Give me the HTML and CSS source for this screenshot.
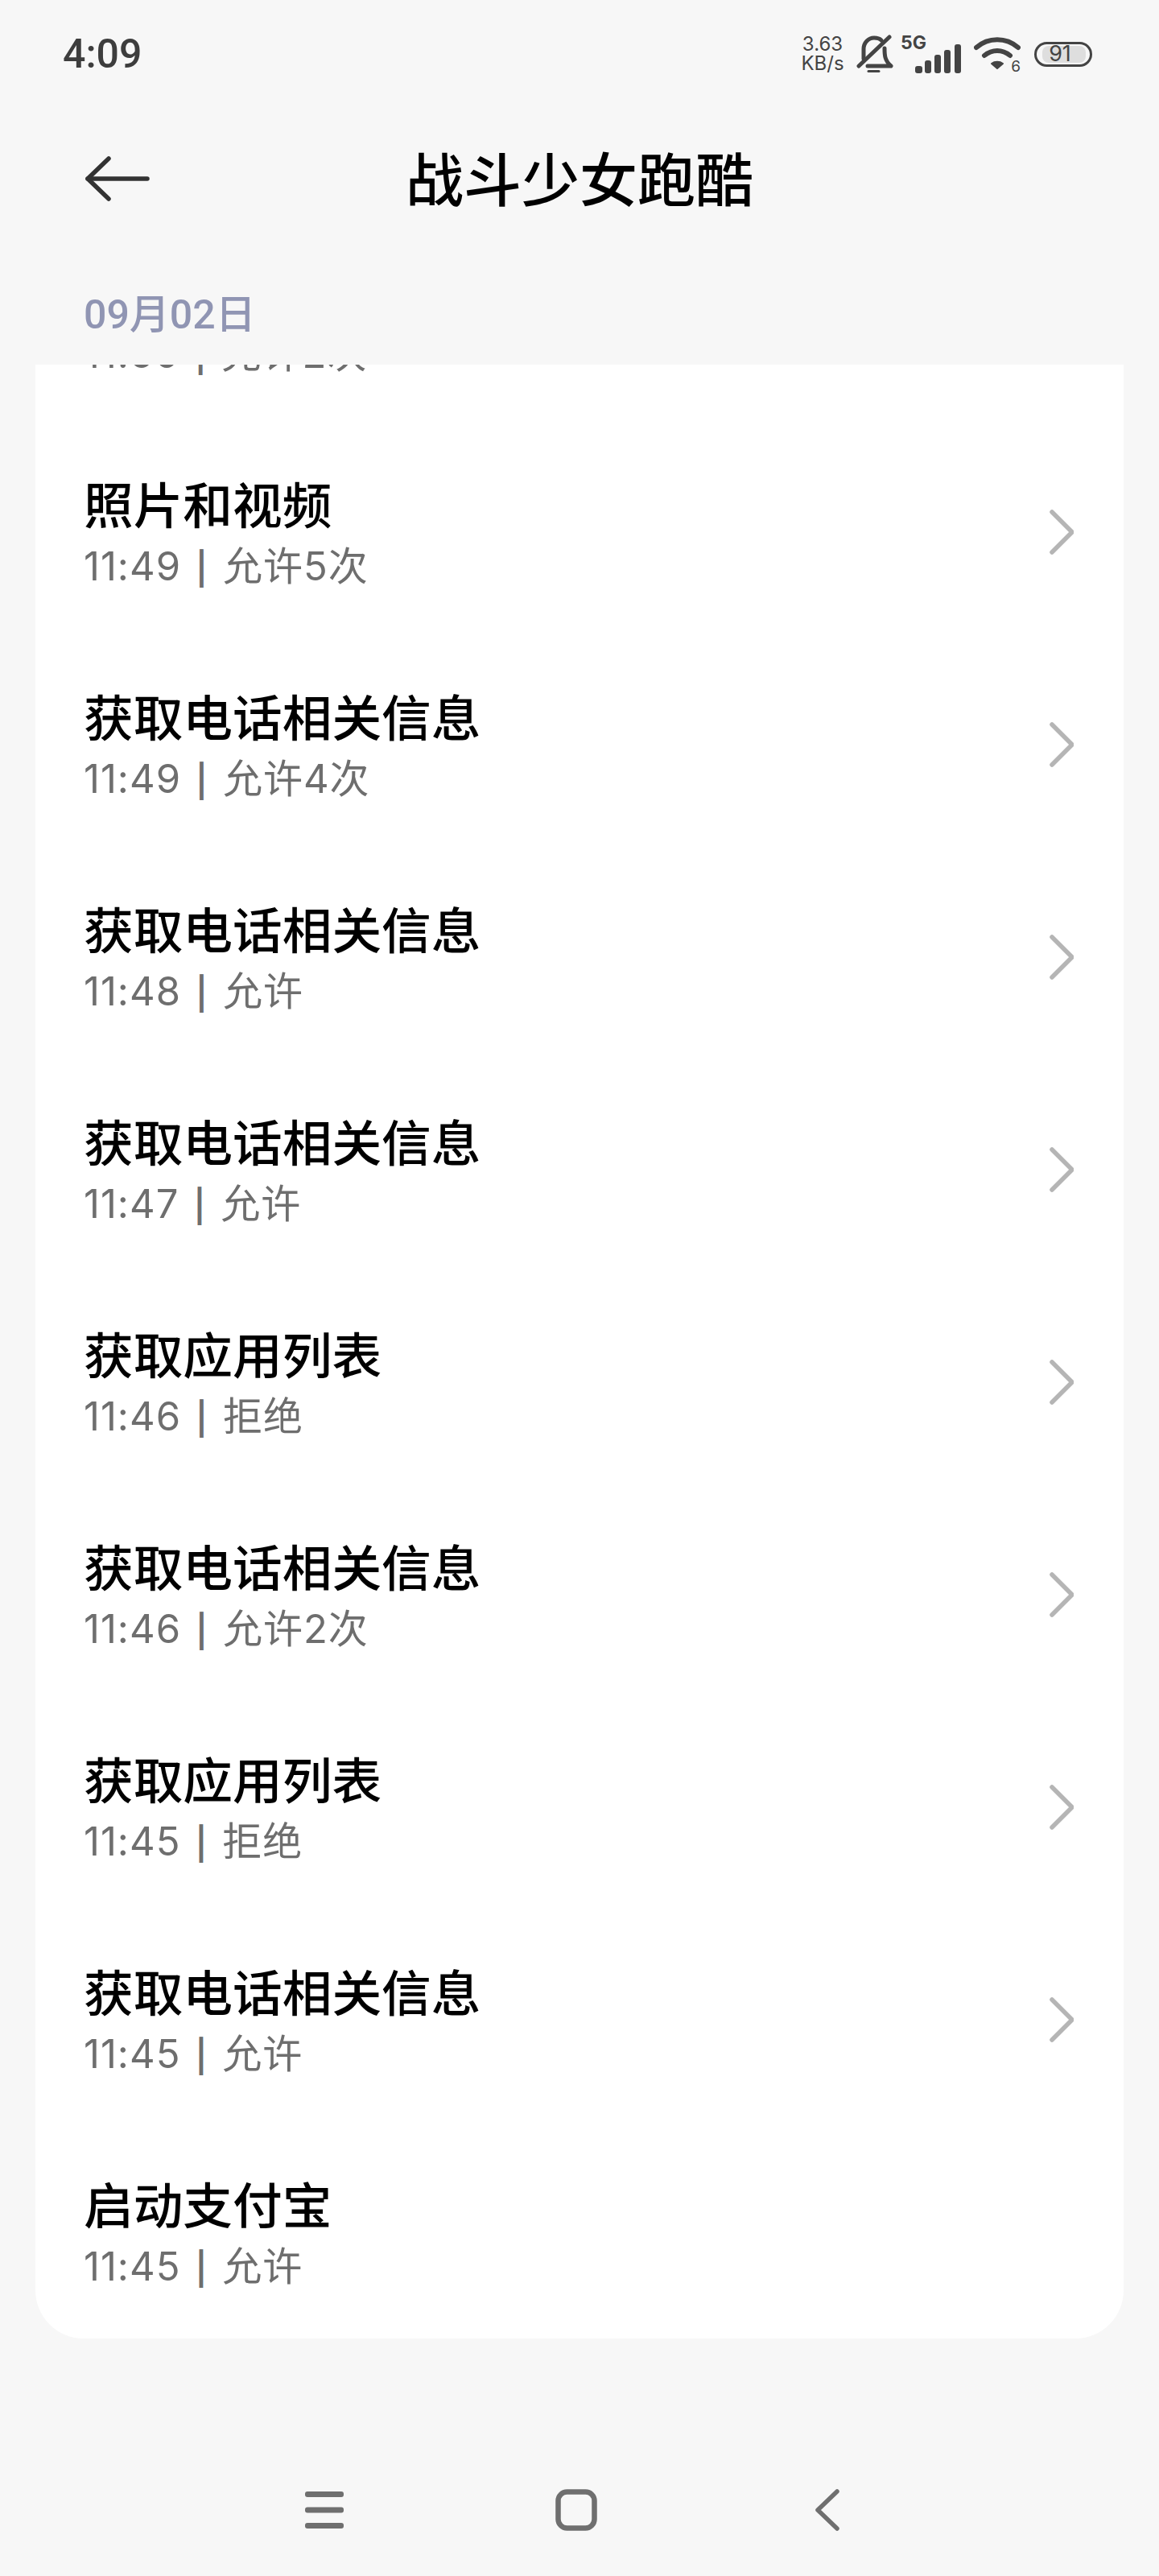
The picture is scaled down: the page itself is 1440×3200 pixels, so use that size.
FILE: index.html
```html
<!DOCTYPE html>
<html lang="zh-CN">
<head>
    <meta charset="UTF-8">
    <meta name="viewport" content="width=device-width, initial-scale=1.0">
    <title>战斗少女跑酷</title>
    <link rel="stylesheet" href="styles.css">
</head>
<body>
    <div class="status-bar">
        <span class="time">4:09</span>
        <div class="status-icons">
            <div class="speed">3.63<br>KB/s</div>
            <svg class="bell" width="46" height="48" viewBox="0 0 46 48" fill="none" stroke="#444" stroke-width="5" stroke-linecap="round" stroke-linejoin="round">
                <path d="M9 30V18C9 10 15 4 22 4c4 0 7 1 9 3"/>
                <path d="M35 17c0 8 0 15 8 22H14"/>
                <path d="M3 39L41 3"/>
                <path d="M15 45.5h13" stroke-width="3"/>
            </svg>
            <div class="network">
                <span class="net-type">5G</span>
                <svg width="57" height="36" viewBox="0 0 57 36" fill="#444">
                    <rect x="0" y="27" width="9" height="9" rx="3"/>
                    <rect x="12" y="20" width="8" height="16" rx="3"/>
                    <rect x="24" y="13" width="8" height="23" rx="3"/>
                    <rect x="36" y="7" width="8" height="29" rx="3"/>
                    <rect x="49" y="0" width="8" height="36" rx="3"/>
                </svg>
            </div>
            <div class="wifi">
                <svg width="58" height="42" viewBox="0 0 58 42" fill="none" stroke="#444" stroke-width="6" stroke-linecap="round">
                    <path d="M3 13C18 0 40 0 55 13"/>
                    <path d="M13 23c10-8 22-8 32 0"/>
                    <path d="M22 33l7 6 7-6c-4-3-10-3-14 0z" fill="#444" stroke-width="2" stroke-linejoin="round"/>
                </svg>
                <span class="wifi-num">6</span>
            </div>
            <div class="battery"><span class="battery-fill"></span><span class="battery-num">91</span></div>
        </div>
    </div>

    <div class="header">
        <svg class="back" width="80" height="56" viewBox="0 0 80 56" fill="none" stroke="#333" stroke-width="5.5" stroke-linecap="round" stroke-linejoin="round">
            <path d="M29 3L3 28l26 25"/>
            <path d="M3 28h74"/>
        </svg>
        <h1>战斗少女跑酷</h1>
    </div>

    <div class="date">09月02日</div>

    <div class="card">
        <div class="list">
            <div class="row">
                <div class="row-text"><div class="row-title">获取位置信息</div><div class="row-sub">11:50 <span class="sep">|</span> 允许2次</div></div>
            </div>
            <div class="row">
                <div class="row-text"><div class="row-title">照片和视频</div><div class="row-sub">11:49 <span class="sep">|</span> 允许5次</div></div>
                <svg class="chevron" width="30" height="56" viewBox="0 0 30 56"><path d="M3 3l25 25L3 53"/></svg>
            </div>
            <div class="row">
                <div class="row-text"><div class="row-title">获取电话相关信息</div><div class="row-sub">11:49 <span class="sep">|</span> 允许4次</div></div>
                <svg class="chevron" width="30" height="56" viewBox="0 0 30 56"><path d="M3 3l25 25L3 53"/></svg>
            </div>
            <div class="row">
                <div class="row-text"><div class="row-title">获取电话相关信息</div><div class="row-sub">11:48 <span class="sep">|</span> 允许</div></div>
                <svg class="chevron" width="30" height="56" viewBox="0 0 30 56"><path d="M3 3l25 25L3 53"/></svg>
            </div>
            <div class="row">
                <div class="row-text"><div class="row-title">获取电话相关信息</div><div class="row-sub">11:47 <span class="sep">|</span> 允许</div></div>
                <svg class="chevron" width="30" height="56" viewBox="0 0 30 56"><path d="M3 3l25 25L3 53"/></svg>
            </div>
            <div class="row">
                <div class="row-text"><div class="row-title">获取应用列表</div><div class="row-sub">11:46 <span class="sep">|</span> 拒绝</div></div>
                <svg class="chevron" width="30" height="56" viewBox="0 0 30 56"><path d="M3 3l25 25L3 53"/></svg>
            </div>
            <div class="row">
                <div class="row-text"><div class="row-title">获取电话相关信息</div><div class="row-sub">11:46 <span class="sep">|</span> 允许2次</div></div>
                <svg class="chevron" width="30" height="56" viewBox="0 0 30 56"><path d="M3 3l25 25L3 53"/></svg>
            </div>
            <div class="row">
                <div class="row-text"><div class="row-title">获取应用列表</div><div class="row-sub">11:45 <span class="sep">|</span> 拒绝</div></div>
                <svg class="chevron" width="30" height="56" viewBox="0 0 30 56"><path d="M3 3l25 25L3 53"/></svg>
            </div>
            <div class="row">
                <div class="row-text"><div class="row-title">获取电话相关信息</div><div class="row-sub">11:45 <span class="sep">|</span> 允许</div></div>
                <svg class="chevron" width="30" height="56" viewBox="0 0 30 56"><path d="M3 3l25 25L3 53"/></svg>
            </div>
            <div class="row">
                <div class="row-text"><div class="row-title">启动支付宝</div><div class="row-sub">11:45 <span class="sep">|</span> 允许</div></div>
            </div>
        </div>
    </div>

    <div class="nav-bar">
        <svg width="48" height="46" viewBox="0 0 48 46" fill="#6f6f6f">
            <rect x="0" y="0" width="48" height="7" rx="3"/>
            <rect x="0" y="19.5" width="48" height="7" rx="3"/>
            <rect x="0" y="39" width="48" height="7" rx="3"/>
        </svg>
        <svg class="nav-home" width="52" height="52" viewBox="0 0 52 52" fill="none" stroke="#6f6f6f" stroke-width="6.5">
            <rect x="3.5" y="3.5" width="45" height="45" rx="11"/>
        </svg>
        <svg width="32" height="52" viewBox="0 0 32 52" fill="none" stroke="#6f6f6f" stroke-width="5.5" stroke-linecap="round" stroke-linejoin="round">
            <path d="M29 3L5 26l24 23"/>
        </svg>
    </div>
</body>
</html>
```

FILE: styles.css
```css
body {
    margin: 0;
    width: 1440px;
    height: 3200px;
    background-color: #f7f7f7;
    font-family: Inter, "Noto Sans CJK SC", sans-serif;
    overflow: hidden;
}

.status-bar {
    height: 134px;
    box-sizing: border-box;
    padding: 0 83px 0 78px;
    display: flex;
    align-items: center;
    justify-content: space-between;
}

.time {
    font-family: Roboto, sans-serif;
    font-size: 50px;
    font-weight: 500;
    color: #3d3d3d;
}

.status-icons {
    display: flex;
    align-items: center;
    color: #444;
}

.speed {
    width: 56px;
    font-size: 24px;
    line-height: 24px;
    text-align: center;
    margin-right: 14px;
}

.bell {
    margin-right: 9px;
}

.network {
    position: relative;
    width: 75px;
    height: 48px;
    display: flex;
    align-items: flex-end;
    justify-content: flex-end;
    margin-right: 16px;
}

.net-type {
    position: absolute;
    left: 0;
    top: -4px;
    font-size: 23px;
    font-weight: 700;
}

.wifi {
    position: relative;
    width: 58px;
    height: 42px;
    margin-right: 17px;
}

.wifi svg {
    display: block;
}

.wifi-num {
    position: absolute;
    right: 0;
    bottom: -6px;
    font-size: 19px;
}

.battery {
    position: relative;
    width: 72px;
    height: 31px;
    box-sizing: border-box;
    padding-right: 8px;
    border: 3.5px solid #444;
    border-radius: 16px;
    display: flex;
    align-items: center;
    justify-content: center;
}

.battery-fill {
    position: absolute;
    left: 7px;
    top: 2px;
    bottom: 2px;
    right: 5px;
    border-radius: 8px;
    background-color: #dedede;
}

.battery-num {
    position: relative;
    font-size: 27px;
    line-height: 24px;
}

.header {
    height: 176px;
    box-sizing: border-box;
    padding-bottom: 8px;
    position: relative;
    display: flex;
    align-items: center;
    justify-content: center;
}

.back {
    position: absolute;
    left: 106px;
    top: 60px;
}

h1 {
    margin: 0;
    font-size: 72px;
    font-weight: 500;
    color: #000;
}

.date {
    height: 143px;
    box-sizing: border-box;
    padding: 48px 0 0 104px;
    font-family: Roboto, "Noto Sans CJK SC", sans-serif;
    font-size: 50px;
    font-weight: 500;
    line-height: 66px;
    color: #9095b3;
}

.card {
    margin: 0 44px;
    height: 2452px;
    background-color: #fff;
    border-radius: 0 0 60px 60px;
    overflow: hidden;
}

.list {
    margin-top: -188px;
}

.row {
    height: 264px;
    box-sizing: border-box;
    padding: 0 62px 0 60px;
    display: flex;
    align-items: center;
    justify-content: space-between;
}

.row-text {
    margin-top: 12px;
}

.row-title {
    font-size: 61.7px;
    font-weight: 500;
    line-height: 76px;
    color: #000;
}

.row-sub {
    font-size: 49px;
    line-height: 74px;
    letter-spacing: 1px;
    word-spacing: 3.5px;
    color: #6e6e6e;
}

.sep {
    font-size: 40px;
    font-weight: 600;
}

.chevron {
    fill: none;
    stroke: #b5b5b5;
    stroke-width: 5.5;
    stroke-linecap: round;
    stroke-linejoin: round;
}

.nav-bar {
    position: absolute;
    left: 379px;
    top: 3092px;
    width: 664px;
    height: 52px;
    display: flex;
    align-items: center;
    justify-content: space-between;
}

.nav-home {
    margin-right: 7px;
}
```
